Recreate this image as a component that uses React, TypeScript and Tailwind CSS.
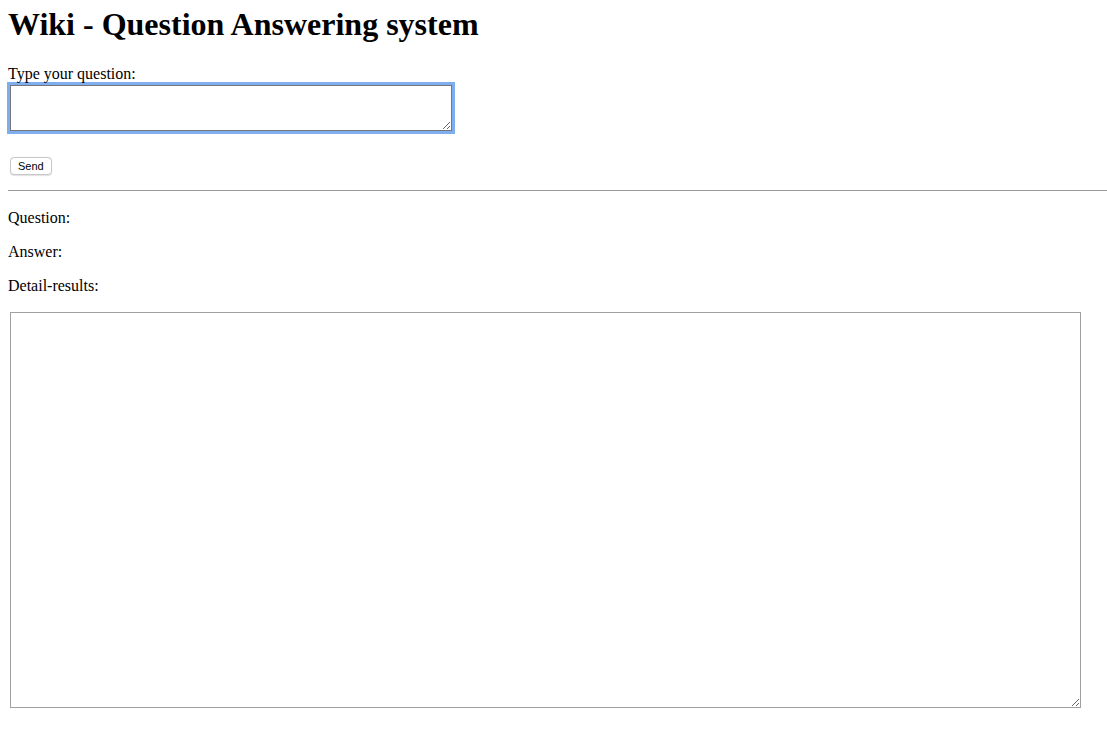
import React, { useState } from 'react';

const App: React.FC = () => {
  const [question, setQuestion] = useState('');
  return <div className="min-h-screen bg-white pl-2 text-black" style={{ fontFamily: '"Liberation Serif", "Times New Roman", serif' }}>
      <h1 className="pt-[6px] text-[32px] font-bold leading-[37px]">Wiki - Question Answering system</h1>
      {/* Question form */}
      <div className="mt-[22px]">
        <label className="block text-base leading-[18px]">Type your question:</label>
        <textarea autoFocus value={question} onChange={e => setQuestion(e.target.value)} className="mt-[2px] ml-[2px] block h-[46px] w-[442px] resize border border-[#767676] bg-white px-[2px] py-[2px] text-[13px] outline-none ring-[3px] ring-[#7eaef0]" />
        <button className="mt-[26px] ml-[2px] block h-[18px] rounded-[4px] border border-[#c8c8c8] bg-white px-[7px] text-[11px] leading-[15px] shadow-[0_0.5px_1px_rgba(0,0,0,0.12)]" style={{ fontFamily: '"Liberation Sans", Arial, sans-serif' }}>
          Send
        </button>
      </div>
      <hr className="mt-[15px] border-t border-[#9a9a9a]" />
      {/* Results */}
      <div className="text-base leading-[18px]">
        <p className="mt-[18px]">Question:</p>
        <p className="mt-[16px]">Answer:</p>
        <p className="mt-[16px]">Detail-results:</p>
      </div>
      <textarea className="mt-[17px] ml-[2px] block h-[396px] w-[1071px] resize border border-[#a0a0a0] bg-white outline-none" />
    </div>;
};

export default App;
